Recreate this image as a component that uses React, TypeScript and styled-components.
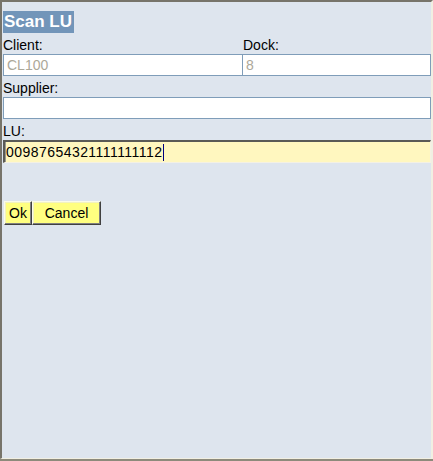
import React from 'react';
import styled, { createGlobalStyle } from 'styled-components';

const GlobalStyle = createGlobalStyle`
  html, body {
    margin: 0;
    padding: 0;
    background: #dee5ee;
  }
  * {
    box-sizing: border-box;
  }
`;

const Window = styled.div`
  width: 433px;
  height: 461px;
  border-bottom: 2px solid #8d8a7b;
`;

const Frame = styled.div`
  height: 100%;
  background: #dee5ee;
  border-style: solid;
  border-width: 2px 2px 1px 2px;
  border-color: #77746a #f1efe2 #f1efe2 #77746a;
  padding: 9px 0 0 1px;
  font-family: 'Liberation Sans', Arial, sans-serif;
  font-size: 14px;
  color: #000;
`;

const Title = styled.div`
  display: inline-block;
  height: 22px;
  line-height: 22px;
  padding: 0 2px 0 1px;
  background: #7295b9;
  color: #fff;
  font-size: 17px;
  font-weight: bold;
`;

const Row = styled.div`
  display: grid;
  grid-template-columns: 240px 188px;
`;

const Label = styled.div`
  padding: 4px 0 1px;
  line-height: 16px;
  height: 21px;
`;

const TextBox = styled.input<{ $noLeft?: boolean }>`
  display: block;
  width: 100%;
  height: 22px;
  margin: 0;
  padding: 0 3px;
  border: 1px solid #7f9db9;
  border-left-width: ${p => (p.$noLeft ? 0 : 1)}px;
  background: #fff;
  font: 14px 'Liberation Sans', Arial, sans-serif;
  color: #000;
  outline: none;

  &:disabled {
    color: #aca899;
    -webkit-text-fill-color: #aca899;
    opacity: 1;
    background: #fff;
  }
`;

const ActiveField = styled.div`
  display: flex;
  align-items: center;
  width: 428px;
  height: 23px;
  padding: 0 1px;
  background: #fff7bf;
  border-style: solid;
  border-width: 2px 1px 1px 2px;
  border-color: #5a5a56 #f4f1e4 #f4f1e4 #5a5a56;
  box-shadow: inset 1px 0 #9a998f;
  white-space: nowrap;
  letter-spacing: 0.45px;
`;

const Caret = styled.span`
  display: inline-block;
  width: 1px;
  height: 17px;
  margin-left: 1px;
  background: #000080;
`;

const ButtonBar = styled.div`
  display: flex;
  margin: 38px 0 0 1px;
`;

const Button = styled.button<{ $width: number }>`
  width: ${p => p.$width}px;
  height: 24px;
  margin: 0;
  padding: 0;
  background: #ffff80;
  border: 1px solid;
  border-color: #fbfbe8 #404040 #404040 #fbfbe8;
  box-shadow: inset -1px -1px #808080, inset 1px 1px #f2f2c0;
  font: 14px 'Liberation Sans', Arial, sans-serif;
  color: #000;
  cursor: pointer;
`;

export default function App() {
  return (
    <>
      <GlobalStyle />
      <Window>
        <Frame>
          <Title>Scan LU</Title>
          <Row>
            <div>
              <Label>Client:</Label>
              <TextBox disabled defaultValue="CL100" />
            </div>
            <div>
              <Label>Dock:</Label>
              <TextBox disabled defaultValue="8" $noLeft />
            </div>
          </Row>
          <Label>Supplier:</Label>
          <TextBox style={{ width: 428 }} defaultValue="" />
          <Label>LU:</Label>
          <ActiveField>
            00987654321111111112
            <Caret />
          </ActiveField>
          <ButtonBar>
            <Button $width={28}>Ok</Button>
            <Button $width={69}>Cancel</Button>
          </ButtonBar>
        </Frame>
      </Window>
    </>
  );
}
